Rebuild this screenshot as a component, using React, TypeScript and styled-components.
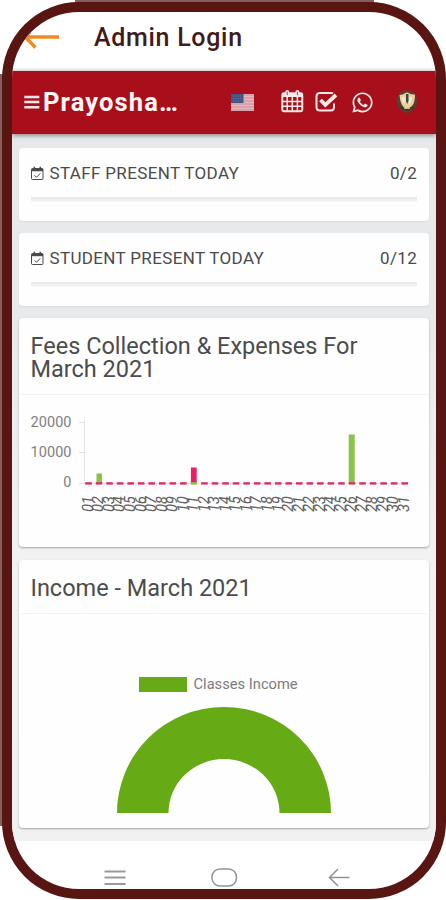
import React from "react";
import styled, { createGlobalStyle } from "styled-components";
import { FaWhatsapp } from "react-icons/fa";

const Global = createGlobalStyle`
  body { margin: 0; background: #fff; font-family: Roboto, "Liberation Sans", sans-serif; }
  *, *::before, *::after { box-sizing: border-box; }
  svg { display: block; flex: none; }
`;

const Page = styled.div`
  position: relative;
  width: 446px;
  height: 900px;
  padding: 2px 0 0 2px;
  overflow: hidden;
  &::before {
    content: "";
    position: absolute;
    left: 0;
    top: 74px;
    width: 3px;
    height: 752px;
    background: #85605e;
  }
  &::after {
    content: "";
    position: absolute;
    left: 75px;
    top: 0;
    width: 299px;
    height: 3px;
    background: #85605e;
  }
`;

const Phone = styled.div`
  position: relative;
  z-index: 1;
  width: 444px;
  height: 897px;
  border: 10px solid #581512;
  border-radius: 77px;
  background: #581512;
`;

const Screen = styled.main`
  width: 424px;
  height: 877px;
  border-radius: 67px;
  overflow: hidden;
  background: #fff;
  display: flex;
  flex-direction: column;
`;

const TitleBar = styled.header`
  height: 58.5px;
  flex: none;
  display: flex;
  align-items: center;
  padding: 0 0 6px 12px;
`;

const Title = styled.h1`
  margin: 0 0 0 35px;
  font-size: 25px;
  font-weight: 500;
  letter-spacing: 0.7px;
  line-height: 30px;
  color: #421a1a;
`;

const AppBar = styled.nav`
  position: relative;
  height: 63px;
  flex: none;
  display: flex;
  align-items: center;
  padding: 0 18px 0 12px;
  color: #fbe9ea;
  background: #a90f1b;
  box-shadow: 0 1px 5px rgba(0, 0, 0, 0.5);
`;

const Brand = styled.span`
  width: 190px;
  margin-left: 3px;
  font-size: 25.5px;
  font-weight: 700;
  letter-spacing: 1.15px;
  line-height: 30px;
  white-space: nowrap;
  color: #fff5f5;
`;

const Actions = styled.div`
  flex: 1;
  display: grid;
  grid-template-columns: 50px 34px 36px 45px 22px;
  align-items: center;
`;

const Content = styled.section`
  height: 707px;
  flex: none;
  display: flex;
  flex-direction: column;
  gap: 12px;
  padding: 14.5px 7px 0 6.5px;
  background: linear-gradient(#e7e8e9, #e7e9ea 185px, #f2f2f2 430px, #f1f1f1);
`;

const Card = styled.article<{ $height: number; $raised?: boolean }>`
  height: ${(p) => p.$height}px;
  flex: none;
  border-radius: 4px;
  background: #fefefe;
  box-shadow: ${(p) => (p.$raised ? "0 1px 2px rgba(0,0,0,.32)" : "0 1px 2px rgba(0,0,0,.06)")};
  &:last-child { margin-top: 1px; }
`;

const Stat = styled.div`
  display: flex;
  align-items: center;
  height: 49px;
  padding: 1px 12px 0 12px;
  font-size: 17px;
  line-height: 20px;
  color: #4a4a4a;
`;

const StatName = styled.span`
  flex: 1;
  margin-left: 5px;
  white-space: nowrap;
  letter-spacing: 0.35px;
`;

const StatValue = styled.span`
  letter-spacing: 0.3px;
`;

const Track = styled.div`
  height: 5px;
  margin: 0 12px;
  background: linear-gradient(#e7e7e7, #f7f7f7);
`;

const Heading = styled.h2<{ $height: number }>`
  height: ${(p) => p.$height}px;
  margin: 0;
  padding: 17px 12px 0;
  border-bottom: 1px solid #f4f4f4;
  font-size: 23.5px;
  font-weight: 400;
  line-height: 23px;
  letter-spacing: 0;
  color: #4c4c4c;
  white-space: nowrap;
`;

const Legend = styled.div`
  display: flex;
  align-items: center;
  gap: 7px;
  height: 16px;
  margin: 62px 0 0 120px;
  font-size: 14.7px;
  color: #7c7c7c;
`;

const Swatch = styled.i`
  width: 48px;
  height: 15px;
  background: #66aa16;
`;

const SystemBar = styled.footer`
  flex: 1;
  display: flex;
  align-items: flex-end;
  justify-content: space-between;
  padding: 0 86px 0 92px;
`;

const HomeKey = styled.span`
  margin-right: 6px;
`;

const AxisText = styled.text`
  font-size: 14.5px;
  fill: #808080;
`;

const DayText = styled.text`
  font-size: 14px;
  fill: #606060;
`;

function CalendarCheck() {
  return (
    <svg width="14" height="14" viewBox="0 0 14 14" fill="none" stroke="#4a4a4a">
      <rect x="0.5" y="2.5" width="11.5" height="11" rx="1" />
      <path d="M.5 4h11.5" strokeWidth="2.4" />
      <path d="M3.3 .8v3M9.3 .8v3" strokeWidth="1.6" />
      <path d="M3.5 9.3l2 2 3.8-4" />
    </svg>
  );
}

function Flag() {
  return (
    <svg width="23" height="17" viewBox="0 0 23 17">
      <rect width="23" height="17" fill="#e3b9c1" />
      <path d="M0 1h23M0 4h23M0 7h23M0 10h23M0 13h23M0 16h23" stroke="#d38791" strokeWidth="1.2" />
      <rect width="12.5" height="9" fill="#425585" />
      <path d="M2 2h10M2 4.5h10M2 7h10" stroke="#7180a5" strokeWidth=".7" strokeDasharray="1 1.4" />
    </svg>
  );
}

function CalendarGrid() {
  return (
    <svg width="23" height="24" viewBox="0 0 23 24" fill="none" stroke="currentColor">
      <rect x="1.3" y="3.2" width="20" height="18" rx="1.5" strokeWidth="1.9" />
      <path d="M1.3 5h20" strokeWidth="4" />
      <path d="M6.2 2v3.5M16.4 2v3.5" strokeWidth="4" strokeLinecap="round" />
      <path d="M6.2 1.6v3.6M16.4 1.6v3.6" stroke="#b53a43" strokeWidth="1" />
      <path d="M6.2 7v14M11.3 7v14M16.4 7v14M1.3 11.5h20M1.3 16.2h20" strokeWidth="1.5" />
    </svg>
  );
}

function CheckSquare() {
  return (
    <svg width="23" height="22" viewBox="0 0 23 22" fill="none" stroke="currentColor">
      <path d="M18 2.4Q17.4 2 16 2H5Q1.5 2 1.5 5.5V16Q1.5 19.5 5 19.5H15.5Q19 19.5 19 16V12.5" strokeWidth="2" />
      <path d="M5.5 9l4.8 4.8L21 4" strokeWidth="3.8" />
    </svg>
  );
}

function Crest() {
  return (
    <svg width="22" height="24" viewBox="0 0 22 24">
      <path d="M4 1.5Q11-.5 18 1.5L21 8Q22 17 17 20Q13 23 11 23Q7 23 4 19Q-1 14 1 8Z" fill="#613b2d" />
      <path d="M3.5 5Q7 5 9 3.2Q11 2 13 3.2Q16 5 19 4.5Q19 13 16 16Q13 19 11 20Q4 16 3.5 5Z" fill="#e6d2a0" />
      <path d="M6 7l3 .5v6l-2-1zM16 7l-3 .5v6l2-1z" fill="#f7edca" />
      <path d="M10 4h2.5v7l-1.3 3-1.2-3z" fill="#39484e" />
      <path d="M4 17l7 3 7-3" fill="none" stroke="#303b31" strokeWidth="2" />
      <path d="M8 18.5h6" stroke="#d3b373" />
    </svg>
  );
}

const days = Array.from({ length: 31 }, (_, i) => i + 1);
const dayX = (d: number) => 69.8 + (d - 1) * 10.54;

function FeesChart() {
  return (
    <svg width="410" height="152" viewBox="0 0 410 152">
      <path d="M65.5 25v64M60 27.5h6M60 57.5h6M60 88.5h330" stroke="#e3e3e3" fill="none" />
      <AxisText x="52.5" y="32" textAnchor="end" textLength="41">20000</AxisText>
      <AxisText x="52.5" y="62" textAnchor="end" textLength="41">10000</AxisText>
      <AxisText x="52.5" y="92" textAnchor="end">0</AxisText>
      <rect x="77.5" y="78.5" width="5.5" height="9.5" fill="#8bc34a" />
      <rect x="171.9" y="72.5" width="5.8" height="16" fill="#e91e63" />
      <rect x="329.7" y="39.5" width="6" height="49" fill="#8bc34a" />
      {days.map((d) => (
        <g key={d}>
          <rect x={dayX(d) - 3.6} y="87.2" width="6.6" height="2.4" fill={d === 11 ? "#8bc34a" : "#d92d64"} />
          <path d={`M${dayX(d) + 5} 90l-2 4`} stroke="#ececec" />
          <DayText transform={`translate(${dayX(d) + 4} 117.5) rotate(-90) skewX(-8) scale(1 1.12)`}>
            {String(d).padStart(2, "0")}
          </DayText>
        </g>
      ))}
    </svg>
  );
}

export default function App() {
  return (
    <>
      <Global />
      <Page>
        <Phone>
          <Screen>
            <TitleBar>
              <svg width="35" height="24" viewBox="0 0 35 24" fill="none" stroke="#ef8b22" strokeWidth="3.3">
                <path d="M35 11H2M6 6L1 11L11.5 21.5" />
              </svg>
              <Title>Admin Login</Title>
            </TitleBar>
            <AppBar>
              <svg width="16" height="16" viewBox="0 0 16 16" stroke="currentColor" strokeWidth="2.4">
                <path d="M.3 3h15M.3 8h15M.3 13.2h15" />
              </svg>
              <Brand>Prayosha…</Brand>
              <Actions>
                <Flag />
                <CalendarGrid />
                <CheckSquare />
                <FaWhatsapp size={23} />
                <Crest />
              </Actions>
            </AppBar>
            <Content>
              <Card $height={73}>
                <Stat>
                  <CalendarCheck />
                  <StatName>STAFF PRESENT TODAY</StatName>
                  <StatValue>0/2</StatValue>
                </Stat>
                <Track />
              </Card>
              <Card $height={73}>
                <Stat>
                  <CalendarCheck />
                  <StatName>STUDENT PRESENT TODAY</StatName>
                  <StatValue>0/12</StatValue>
                </Stat>
                <Track />
              </Card>
              <Card $height={229} $raised>
                <Heading $height={77}>
                  Fees Collection &amp; Expenses For<br />March 2021
                </Heading>
                <FeesChart />
              </Card>
              <Card $height={268} $raised>
                <Heading $height={54}>Income - March 2021</Heading>
                <Legend>
                  <Swatch />
                  Classes Income
                </Legend>
                <svg width="410" height="122" viewBox="0 0 410 122">
                  <path d="M98 121A107 106 0 0 1 312 121H260.5A55.5 54 0 0 0 149.5 121Z" fill="#66aa16" />
                </svg>
              </Card>
            </Content>
            <SystemBar>
              <svg width="22" height="20" viewBox="0 0 22 20" stroke="#999" strokeWidth="1.8">
                <path d="M.5 2.5h21M.5 8.5h21M.5 15h21" />
              </svg>
              <HomeKey>
                <svg width="27" height="21" viewBox="0 0 27 21" fill="none" stroke="#929292" strokeWidth="1.5">
                  <rect x="1" y="1" width="24.5" height="17" rx="8" />
                </svg>
              </HomeKey>
              <svg width="22" height="21" viewBox="0 0 22 21" fill="none" stroke="#929292" strokeWidth="1.5">
                <path d="M21.5 9.5H2M10 1L1.5 9.5L10 18" />
              </svg>
            </SystemBar>
          </Screen>
        </Phone>
      </Page>
    </>
  );
}
